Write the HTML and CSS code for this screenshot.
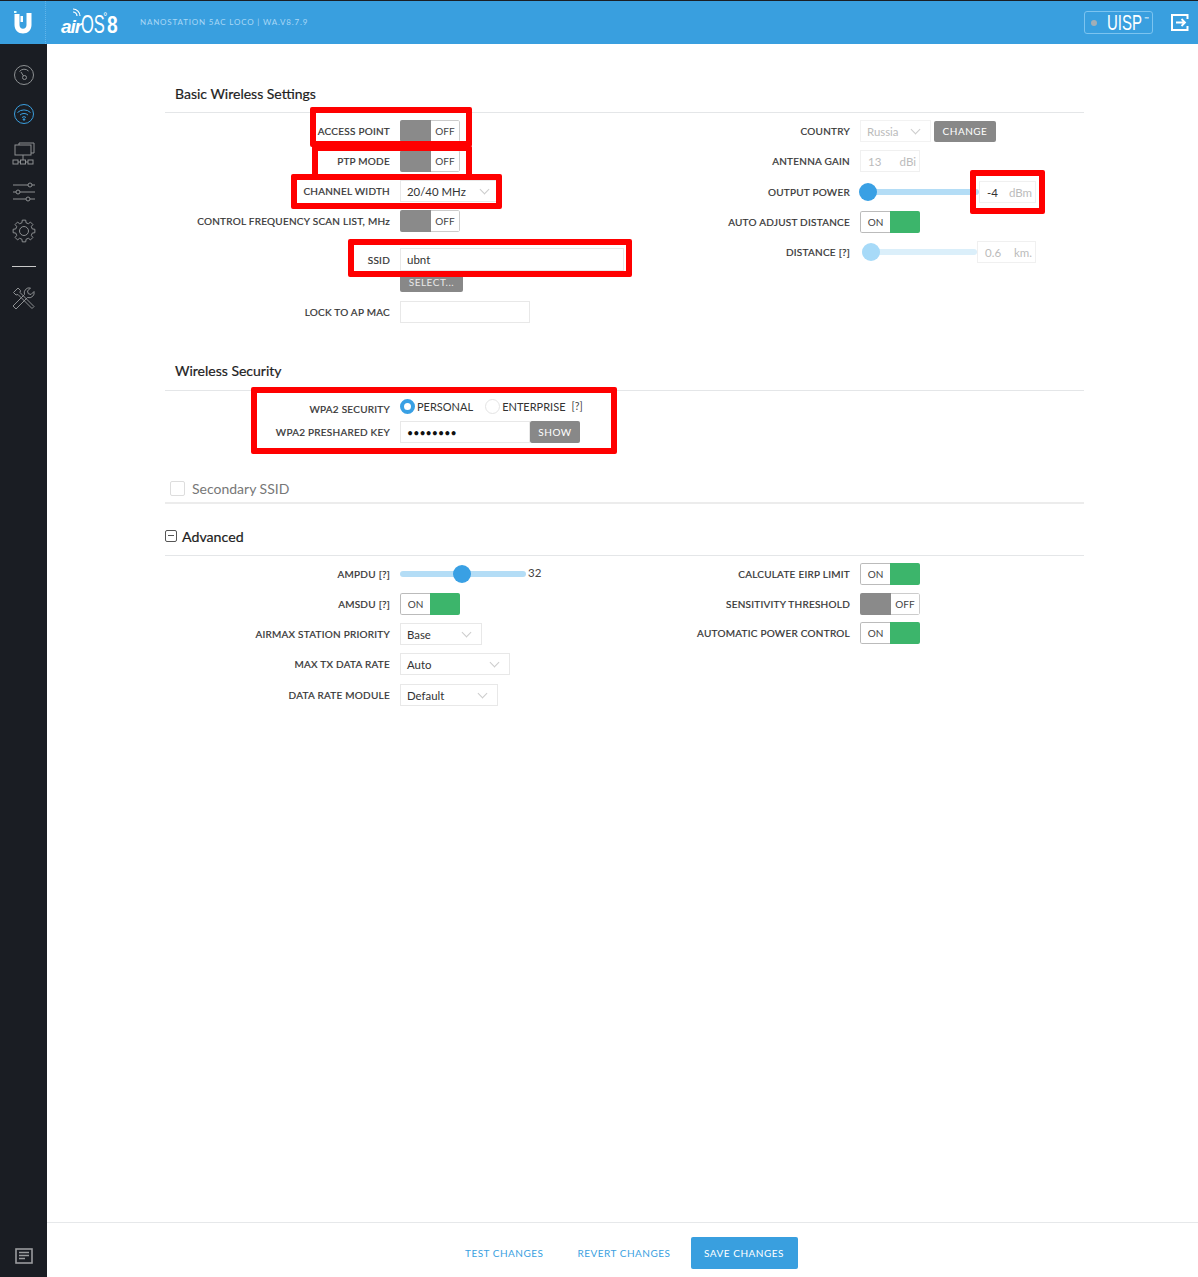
FILE: index.html
```html
<!DOCTYPE html>
<html lang="en">
<head>
<meta charset="utf-8">
<title>airOS 8 - Wireless</title>
<link rel="stylesheet" href="styles.css">
</head>
<body>
<div class="app">
  <header class="topbar">
    <div class="brand-u">
      <svg width="22" height="24" viewBox="0 0 22 24"><path d="M2.500 3v11c0 5 3.800 8.500 8.500 8.500s8.500-3.500 8.500-8.500V2h-5v12c0 2.200-1.500 3.700-3.500 3.700S7.500 16.200 7.500 14V3z" fill="#fff"/><rect x="8.500" y="5" width="2.500" height="6" fill="#fff"/><rect x="2" y="0" width="2.500" height="2" fill="#dff"/></svg>
    </div>
    <div class="brand-os">
      <svg class="os-wifi" width="9" height="8" viewBox="0 0 9 8" fill="none" stroke="#fff" stroke-width="1.200"><path d="M1 1a7 7 0 0 1 7 7M1 4a4 4 0 0 1 4 4"/></svg>
      <span class="os-air">air</span><span class="os-os">OS</span><span class="os-tm">°</span><span class="os-8">8</span>
    </div>
    <div class="device">NANOSTATION 5AC LOCO | WA.V8.7.9</div>
    <div class="uisp"><span class="uisp-dot"></span><span class="uisp-text">UISP</span><span class="uisp-tm">™</span></div>
    <svg class="logout" width="18" height="17" viewBox="0 0 18 17" fill="none" stroke="#fff"><path d="M16.500 5V1H1v15h15.500v-4" stroke-width="2"/><path d="M5 8.500h9M10.500 5l3.500 3.500L10.500 12" stroke-width="1.800"/></svg>
  </header>
  <div class="workspace">
    <nav class="sidebar">
      <svg class="nav-icon" width="24" height="24" viewBox="0 0 24 24" fill="none" stroke="#8d9092"><circle cx="12" cy="12" r="9.500"/><path d="M7.500 8.500a6 6 0 0 1 9-.5M9 9l2.500 4"/><circle cx="12.500" cy="14.500" r="2"/></svg>
      <svg class="nav-icon" width="24" height="24" viewBox="0 0 24 24" fill="none" stroke="#3a9fdf"><circle cx="12" cy="12" r="9.500"/><path d="M5.500 10.500a9.500 9.500 0 0 1 13 0M8 13a6 6 0 0 1 8 0M10 15.500a3 3 0 0 1 4 0"/><circle cx="12" cy="17.500" r=".8" fill="#3a9fdf"/></svg>
      <svg class="nav-icon" width="24" height="24" viewBox="0 0 24 24" fill="none" stroke="#8d9092"><path d="M7 4V2h15v10h-3"/><rect x="3" y="4" width="16" height="10"/><path d="M11 14v5"/><path d="M6 21h2.500M13.500 21H16"/><rect x="1" y="19" width="5" height="4"/><rect x="8.500" y="19" width="5" height="4"/><rect x="16" y="19" width="5" height="4"/></svg>
      <svg class="nav-icon" width="24" height="24" viewBox="0 0 24 24" fill="none" stroke="#8d9092"><path d="M1 5h15M20 5h3M1 12h3M8 12h15M1 19h13M18 19h5"/><circle cx="18" cy="5" r="2"/><circle cx="6" cy="12" r="2"/><circle cx="16" cy="19" r="2"/></svg>
      <svg class="nav-icon" width="24" height="24" viewBox="0 0 24 24" fill="none" stroke="#8d9092"><circle cx="12" cy="12" r="4.500"/><path d="M9.940 3.750 10.280 1.130H13.720L14.060 3.750 16.380 4.710 18.470 3.100 20.900 5.530 19.290 7.620 20.250 9.940 22.870 10.280V13.720L20.250 14.060 19.290 16.380 20.900 18.470 18.470 20.900 16.380 19.290 14.060 20.250 13.720 22.870H10.280L9.940 20.250 7.620 19.290 5.530 20.900 3.100 18.470 4.710 16.380 3.750 14.060 1.130 13.720V10.280L3.750 9.940 4.710 7.620 3.100 5.530 5.530 3.100 7.620 4.710z"/></svg>
      <div class="nav-rule"></div>
      <svg class="nav-icon" width="24" height="24" viewBox="0 0 24 24" fill="none" stroke="#8d9092"><path d="M2 20 13.500 8.500a5 5 0 0 1 6-6.500l-3 3 .8 2.700 2.700.8 3-3a5 5 0 0 1-6.500 6L5 23z" transform="translate(-1 -1)"/><path d="M3 4 1.500 5.500 4 8l2-.5L20 21.500l2-2L8 5.500 8.500 3.500 6 1z"/></svg>
      <div class="nav-spacer"></div>
      <svg class="nav-note" width="18" height="16" viewBox="0 0 18 16"><rect x="1" y="1" width="16" height="14" fill="none" stroke="#9a9c9e" stroke-width="1.600"/><path d="M4 4.500h10M4 7.500h10M4 10.500h6" stroke="#9a9c9e" stroke-width="1.600"/></svg>
    </nav>
    <main class="main">
      <div class="content">
        <h2 class="section-head">Basic Wireless Settings</h2>
        <section class="columns">
          <div class="col col-left">
            <div class="row"><span class="label">ACCESS POINT</span><span class="toggle"><span class="knob-off"></span><span class="toggle-off">OFF</span></span></div>
            <div class="row"><span class="label">PTP MODE</span><span class="toggle"><span class="knob-off"></span><span class="toggle-off">OFF</span></span></div>
            <div class="row"><span class="label">CHANNEL WIDTH</span><span class="select w100">20/40 MHz<i class="chev"></i></span></div>
            <div class="row"><span class="label">CONTROL FREQUENCY SCAN LIST, MHz</span><span class="toggle"><span class="knob-off"></span><span class="toggle-off">OFF</span></span></div>
            <div class="ssid-block">
              <div class="row row-ssid"><span class="label">SSID</span><span class="input w227">ubnt</span></div>
              <div class="row row-select"><span class="label"></span><span class="btn btn-select">SELECT...</span></div>
            </div>
            <div class="row row-lock"><span class="label">LOCK TO AP MAC</span><span class="input w130"></span></div>
          </div>
          <div class="col col-right">
            <div class="row"><span class="label">COUNTRY</span><span class="select w71 muted faint">Russia<i class="chev"></i></span><span class="btn btn-change">CHANGE</span></div>
            <div class="row"><span class="label">ANTENNA GAIN</span><span class="unit-input w60 muted"><span>13</span><span>dBi</span></span></div>
            <div class="row row-shift"><span class="label">OUTPUT POWER</span>
              <span class="slider w119"><span class="track"></span><span class="thumb thumb-start"></span></span>
              <span class="unit-input w57"><span class="value-dark">-4</span><span class="muted">dBm</span></span></div>
            <div class="row"><span class="label">AUTO ADJUST DISTANCE</span><span class="toggle"><span class="toggle-on">ON</span><span class="knob-on"></span></span></div>
            <div class="row"><span class="label">DISTANCE [?]</span>
              <span class="slider w114 slider-pale"><span class="track"></span><span class="thumb thumb-start"></span></span>
              <span class="unit-input w59 muted"><span>0.6</span><span>km.</span></span></div>
          </div>
        </section>

        <h2 class="section-head head-second">Wireless Security</h2>
        <section class="security">
          <div class="row row-radio"><span class="label label-low">WPA2 SECURITY</span>
            <span class="radio radio-on"></span><span class="radio-text">PERSONAL</span>
            <span class="radio radio-idle"></span><span class="radio-text">ENTERPRISE</span><span class="radio-help">[?]</span></div>
          <div class="row"><span class="label">WPA2 PRESHARED KEY</span><span class="input w130 dots">••••••••</span><span class="btn btn-show">SHOW</span></div>
        </section>

        <div class="section-head head-secondary"><span class="check"></span>Secondary SSID</div>
        <div class="section-head head-advanced"><span class="minus"></span>Advanced</div>
        <section class="columns">
          <div class="col col-left">
            <div class="row"><span class="label">AMPDU [?]</span>
              <span class="slider w126"><span class="track"></span><span class="thumb" style="left:53px"></span></span><span class="slider-val">32</span></div>
            <div class="row"><span class="label">AMSDU [?]</span><span class="toggle"><span class="toggle-on">ON</span><span class="knob-on"></span></span></div>
            <div class="row"><span class="label">AIRMAX STATION PRIORITY</span><span class="select w82">Base<i class="chev"></i></span></div>
            <div class="row"><span class="label">MAX TX DATA RATE</span><span class="select w110">Auto<i class="chev"></i></span></div>
            <div class="row row-shift"><span class="label">DATA RATE MODULE</span><span class="select w98">Default<i class="chev"></i></span></div>
          </div>
          <div class="col col-right">
            <div class="row"><span class="label">CALCULATE EIRP LIMIT</span><span class="toggle"><span class="toggle-on">ON</span><span class="knob-on"></span></span></div>
            <div class="row"><span class="label">SENSITIVITY THRESHOLD</span><span class="toggle"><span class="knob-off"></span><span class="toggle-off">OFF</span></span></div>
            <div class="row row-back"><span class="label">AUTOMATIC POWER CONTROL</span><span class="toggle"><span class="toggle-on">ON</span><span class="knob-on"></span></span></div>
          </div>
        </section>
      </div>
      <footer class="footer">
        <span class="link">TEST CHANGES</span>
        <span class="link">REVERT CHANGES</span>
        <span class="save">SAVE CHANGES</span>
      </footer>
    </main>
  </div>
  <div class="mark mark-ap"></div>
  <div class="mark mark-ptp"></div>
  <div class="mark mark-cw"></div>
  <div class="mark mark-ssid"></div>
  <div class="mark mark-dbm"></div>
  <div class="mark mark-wpa"></div>
</div>
</body>
</html>
```
FILE: styles.css
```css
* { box-sizing: border-box; }
html, body { margin: 0; height: 100%; overflow: hidden; background: #fff; }
body { font-family: Lato, "Noto Sans", sans-serif; color: #222; }
.app { position: relative; height: 1277px; display: flex; flex-direction: column; }

/* Top bar */
.topbar { height: 44px; flex: none; background: #399fdf; border-top: 1px solid #1b1e24; display: flex; align-items: center; position: relative; }
.brand-u { width: 46px; height: 43px; display: flex; align-items: center; justify-content: center; border-right: 1px dotted #62b5ea; }
.brand-os { margin-left: 15px; width: 78px; color: #fff; display: flex; align-items: baseline; font-family: "Liberation Sans", sans-serif; line-height: 1; white-space: nowrap; position: relative; top: 2px; }
.os-wifi { position: absolute; left: 11px; top: -4px; }
.os-air { font-size: 19px; font-style: italic; font-weight: 700; letter-spacing: -1px; }
.os-os { font-size: 25px; transform: scaleX(.66); transform-origin: left; width: 22px; display: inline-block; }
.os-tm { font-size: 10px; align-self: flex-start; }
.os-8 { font-size: 24px; transform: scaleX(.8); transform-origin: left; font-weight: 700; }
.device { font-size: 8px; letter-spacing: .82px; color: #a9d8f6; margin: -2px 0 0 1px; white-space: nowrap; }
.uisp { margin-left: auto; margin-right: 18px; width: 69px; height: 23px; border: 1px solid #7cc4f0; border-radius: 3px; display: flex; align-items: center; padding-left: 6px; color: #fff; }
.uisp-dot { width: 6px; height: 6px; border-radius: 50%; background: #a2aeb6; }
.uisp-text { font-size: 22px; margin-left: 10px; transform: scaleX(.68); transform-origin: left; width: 36px; font-family: "Liberation Sans", sans-serif; }
.uisp-tm { font-size: 6px; align-self: flex-start; margin-top: 3px; margin-left: 1px; }
.logout { margin-right: 9px; }

.workspace { flex: 1; display: flex; min-height: 0; }

/* Sidebar */
.sidebar { width: 47px; flex: none; background: #1a1d23; display: flex; flex-direction: column; align-items: center; padding-top: 19px; }
.nav-icon { display: block; margin-bottom: 15px; flex: none; }
.nav-rule { width: 24px; height: 1px; background: #c9c9c9; margin: 8px 0 20px; flex: none; }
.nav-spacer { flex: 1; }
.nav-note { margin-bottom: 13px; }

/* Main */
.main { flex: 1; display: flex; flex-direction: column; min-width: 0; }
.content { flex: 1; padding: 0 114px 0 118px; }
.section-head { margin: 0; height: 69px; padding: 0 0 10px 10px; display: flex; align-items: flex-end; font-size: 14px; font-weight: 400; color: #222; border-bottom: 1px solid #e4e6e8; -webkit-text-stroke: .2px #222; }
.head-second { height: 68px; padding-bottom: 11px; }
.head-secondary { height: 61px; padding: 0 0 5px 5px; color: #777; -webkit-text-stroke: 0; border-bottom: 2px solid #ececec; }
.head-advanced { height: 52px; padding: 0 0 10px 0; font-size: 14.200px; }
.check { width: 15px; height: 15px; border: 1px solid #ddd; border-radius: 2px; margin: 0 7px 1px 0; }
.minus { width: 12px; height: 12px; border: 1px solid #555; border-radius: 2px; margin: 0 5px 3px 0; position: relative; }
.minus::after { content: ""; position: absolute; left: 2px; right: 2px; top: 4px; height: 1px; background: #555; }

.columns { display: flex; padding-top: 7px; }
.col { display: flex; flex-direction: column; gap: 8px; }
.col-left { width: 459px; }
.col-right { margin-left: 11px; width: 449px; }
.row { display: flex; align-items: center; height: 22px; flex: none; }
.label { width: 235px; padding: 0 10px 0 0; flex: none; text-align: right; font-size: 10px; font-weight: 400; letter-spacing: .25px; color: #333; white-space: nowrap; -webkit-text-stroke: .2px #333; }
.col-right .label { width: 225px; }
.ssid-block { margin-top: 8px; display: flex; flex-direction: column; }
.row-ssid { height: 23px; }
.row-select { height: 21px; }
.row-lock { margin-top: 1px; }
.row-shift { margin-top: 1px; }
.row-back { margin-top: -1px; }

/* Controls */
.toggle { width: 60px; height: 22px; display: flex; border-radius: 2px; overflow: hidden; font-size: 10px; color: #444; }
.knob-off { width: 31px; background: #8a8a8a; }
.toggle-off { flex: 1; border: 1px solid #ccc; border-left: 0; border-radius: 0 2px 2px 0; display: flex; align-items: center; justify-content: center; }
.toggle-on { width: 30px; border: 1px solid #bbb; border-right: 0; border-radius: 2px 0 0 2px; display: flex; align-items: center; justify-content: center; }
.knob-on { flex: 1; background: #3cb56b; }
.select { height: 22px; border: 1px solid #e8e8e8; padding-left: 6px; font-size: 11.400px; color: #333; display: flex; align-items: center; position: relative; }
.faint { border-color: #f2f2f2; }
.chev { position: absolute; right: 11px; top: 5px; width: 7px; height: 7px; border-right: 1px solid #ccc; border-bottom: 1px solid #ccc; transform: rotate(45deg); }
.input { height: 100%; border: 1px solid #e8e8e8; padding-left: 6px; font-size: 11.500px; color: #333; display: flex; align-items: center; }
.dots { font-size: 10.700px; color: #111; }
.unit-input { height: 22px; border: 1px solid #f0f0f0; padding: 0 3px 0 7px; font-size: 11.500px; display: flex; align-items: center; justify-content: space-between; }
.muted { color: #bbb; }
.value-dark { color: #333; }
.w57 { width: 57px; } .w59 { width: 59px; } .w60 { width: 60px; } .w71 { width: 71px; }
.w82 { width: 82px; } .w98 { width: 98px; } .w100 { width: 100px; } .w110 { width: 110px; }
.w130 { width: 130px; } .w227 { width: 227px; }
.w114 { width: 114px; margin-left: 3px; } .w119 { width: 119px; } .w126 { width: 126px; }
.btn { background: #888; color: #fff; font-size: 10px; letter-spacing: .5px; border-radius: 2px; display: flex; align-items: center; justify-content: center; }
.btn-select { width: 63px; height: 21px; border-radius: 0 0 2px 2px; color: #e9e9e9; }
.btn-change { width: 62px; height: 21px; margin-left: 3px; }
.btn-show { width: 50px; height: 22px; }
.slider { position: relative; height: 18px; display: block; }
.track { position: absolute; left: 0; right: 0; top: 6px; height: 6px; background: #b4ddf6; border-radius: 3px; }
.thumb { position: absolute; top: 0; width: 18px; height: 18px; border-radius: 50%; background: #39a0e4; }
.thumb-start { left: -1px; }
.slider-pale .track { background: #dbeffa; }
.slider-pale .thumb { background: #a7daf8; }
.slider-val { font-size: 11.500px; color: #444; margin: -4px 0 0 2px; }

/* Security */
.security { display: flex; flex-direction: column; gap: 7px; padding-top: 7px; }
.row-radio { height: 16px; }
.label-low { position: relative; top: 3px; }
.radio { width: 15px; height: 15px; border-radius: 50%; flex: none; }
.radio-on { background: #fff; border: 4px solid #39a0e4; }
.radio-idle { border: 1px solid #e4e4e4; margin-left: 12px; }
.radio-text { font-size: 11px; color: #333; margin-left: 2px; }
.radio-help { font-size: 10.500px; color: #444; margin-left: 6px; }

/* Footer */
.footer { height: 55px; flex: none; border-top: 1px solid #e6e8ea; display: flex; align-items: center; padding-left: 418px; padding-top: 6px; font-size: 10px; letter-spacing: .5px; }
.link { color: #3a9fdf; margin-right: 34px; }
.link + .link { margin-right: 20px; }
.save { width: 107px; height: 32px; background: #399fdf; color: #fff; border-radius: 2px; display: flex; align-items: center; justify-content: center; }

/* Red annotation boxes painted over the screenshot */
.mark { position: absolute; border: 6px solid #f00; border-radius: 2px; pointer-events: none; }
.mark-ap { left: 310px; top: 107px; width: 162px; height: 40px; }
.mark-ptp { left: 312px; top: 146px; width: 160px; height: 30px; border-width: 5px 6px 0; }
.mark-cw { left: 291px; top: 174px; width: 211px; height: 35px; }
.mark-ssid { left: 348px; top: 239px; width: 284px; height: 38px; }
.mark-dbm { left: 970px; top: 170px; width: 75px; height: 44px; }
.mark-wpa { left: 251px; top: 387px; width: 366px; height: 67px; }
```
